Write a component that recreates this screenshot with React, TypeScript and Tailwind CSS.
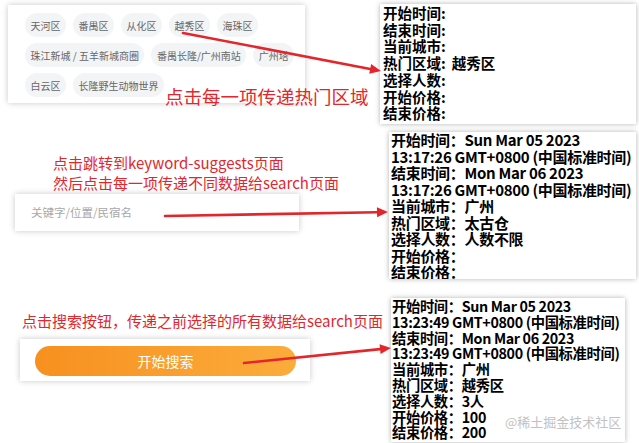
const chipRows = [
  ['天河区', '番禺区', '从化区', '越秀区', '海珠区'],
  ['珠江新城 / 五羊新城商圈', '番禺长隆/广州南站', '广州塔'],
  ['白云区', '长隆野生动物世界'],
];

const box1 = [
  ['开始时间', ''],
  ['结束时间', ''],
  ['当前城市', ''],
  ['热门区域', '越秀区'],
  ['选择人数', ''],
  ['开始价格', ''],
  ['结束价格', ''],
];

const box2 = [
  '开始时间：Sun Mar 05 2023',
  '13:17:26 GMT+0800 (中国标准时间)',
  '结束时间：Mon Mar 06 2023',
  '13:17:26 GMT+0800 (中国标准时间)',
  '当前城市：广州',
  '热门区域：太古仓',
  '选择人数：人数不限',
  '开始价格：',
  '结束价格：',
];

const box3 = [
  '开始时间：Sun Mar 05 2023',
  '13:23:49 GMT+0800 (中国标准时间)',
  '结束时间：Mon Mar 06 2023',
  '13:23:49 GMT+0800 (中国标准时间)',
  '当前城市：广州',
  '热门区域：越秀区',
  '选择人数：3人',
  '开始价格：100',
  '结束价格：200',
];

const font = "font-['Noto_Sans_CJK_SC','Noto_Sans',sans-serif]";

function Arrow({ x1, y1, x2, y2 }: { x1: number; y1: number; x2: number; y2: number }) {
  const a = Math.atan2(y2 - y1, x2 - x1);
  const len = 11;
  const w = 5;
  const bx = x2 - len * Math.cos(a);
  const by = y2 - len * Math.sin(a);
  const p1 = `${bx + w * Math.sin(a)},${by - w * Math.cos(a)}`;
  const p2 = `${bx - w * Math.sin(a)},${by + w * Math.cos(a)}`;
  return (
    <g>
      <line x1={x1} y1={y1} x2={bx} y2={by} stroke="#e3262b" strokeWidth={2.6} strokeLinecap="round" />
      <polygon points={`${x2},${y2} ${p1} ${p2}`} fill="#e3262b" />
    </g>
  );
}

export default function App() {
  return (
    <div className={`relative w-[639px] h-[443px] overflow-hidden bg-white flex ${font}`}>
      {/* left column */}
      <div className="w-[380px] flex flex-col shrink-0">
        <div className="mt-[5px] ml-[8px] w-[297px] h-[98px] bg-white shadow-[0_0_6px_rgba(0,0,0,0.22)] pl-[17px] pt-[8px] flex flex-col gap-[6px] overflow-hidden">
          {chipRows.map((row, i) => (
            <div key={i} className="flex gap-[7px] whitespace-nowrap">
              {row.map((c) => (
                <div
                  key={c}
                  className="h-[24px] px-[5.5px] rounded-full bg-[#f3f4f6] text-[#666] text-[10px] flex items-center"
                >
                  {c}
                </div>
              ))}
            </div>
          ))}
        </div>

        <div className="mt-[50px] pl-[53px] text-[#e3262b] text-[15px] leading-[20px] whitespace-nowrap">
          <div>点击跳转到keyword-suggests页面</div>
          <div>然后点击每一项传递不同数据给search页面</div>
        </div>
        <div className="mt-[1px] ml-[15px] w-[284px] h-[37px] bg-white shadow-[0_0_6px_rgba(0,0,0,0.22)] flex items-center pl-[16px] text-[11.5px] text-[#a8a8a8]">
          关键字/位置/民宿名
        </div>

        <div className="mt-[80px] pl-[22px] text-[#e3262b] text-[15px] leading-[20px] whitespace-nowrap">
          点击搜索按钮，传递之前选择的所有数据给search页面
        </div>
        <div className="mt-[8px] ml-[20px] w-[290px] h-[42px] bg-white shadow-[0_0_6px_rgba(0,0,0,0.22)] pl-[15px] pt-[7px]">
          <div className="w-[261px] h-[30px] rounded-full bg-gradient-to-r from-[#f7901e] to-[#fbac3b] flex items-center justify-center text-white text-[14px]">
            开始搜索
          </div>
        </div>
      </div>

      {/* right column */}
      <div className="flex flex-col">
        <div className="mt-[4px] w-[256px] h-[120px] bg-white shadow-[0_0_5px_rgba(0,0,0,0.3)] pl-[3px] pt-[1px] font-bold text-black text-[14.5px] leading-[16.7px] overflow-hidden">
          {box1.map(([k, v]) => (
            <div key={k} className="whitespace-nowrap">
              {k}:<span className="ml-[6px]">{v}</span>
            </div>
          ))}
        </div>
        <div className="mt-[8px] ml-[9px] w-[247px] h-[147px] bg-white shadow-[0_0_5px_rgba(0,0,0,0.3)] pl-[2px] font-bold text-black text-[15px] tracking-[-0.3px] leading-[16.5px] overflow-hidden">
          {box2.map((l, i) => (
            <div key={i} className="whitespace-nowrap">{l}</div>
          ))}
        </div>
        <div className="mt-[19px] ml-[11px] w-[234px] h-[144px] bg-white shadow-[0_0_5px_rgba(0,0,0,0.3)] pl-[1px] font-bold text-black text-[14.3px] tracking-[-0.35px] leading-[15.8px] overflow-hidden">
          {box3.map((l, i) => (
            <div key={i} className="whitespace-nowrap">{l}</div>
          ))}
        </div>
      </div>

      {/* annotations */}
      <div className="absolute left-[165px] top-[84px] text-[#e3262b] text-[18.5px] leading-[24px] whitespace-nowrap">
        点击每一项传递热门区域
      </div>
      <div className="absolute left-[505px] top-[412px] text-[#c2c2c2] text-[13px] whitespace-nowrap">
        @稀土掘金技术社区
      </div>
      <svg className="absolute inset-0 pointer-events-none" width={639} height={443}>
        <Arrow x1={183} y1={33} x2={381} y2={71} />
        <Arrow x1={165} y1={216} x2={388} y2={212} />
        <Arrow x1={244} y1={363} x2={391} y2={348} />
      </svg>
    </div>
  );
}
